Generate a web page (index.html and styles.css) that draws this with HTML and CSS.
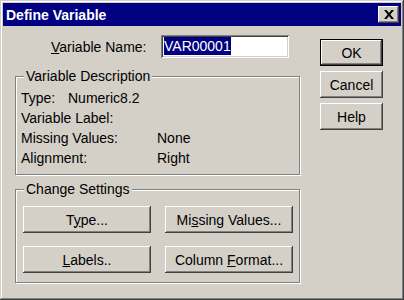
FILE: index.html
```html
<!DOCTYPE html>
<html lang="en">
<head>
    <meta charset="UTF-8">
    <title>Define Variable</title>
    <link rel="stylesheet" href="styles.css">
</head>
<body>
    <div class="window">
        <div class="titlebar">
            <span class="title">Define Variable</span>
            <div class="close-btn">
                <svg width="10" height="9" viewBox="0 0 10 9">
                    <path d="M0 0h2.6l2.4 2.9 2.4-2.9h2.6l-3.7 4.5 3.7 4.5h-2.6l-2.4-2.9-2.4 2.9h-2.6l3.7-4.5z" fill="#000"/>
                </svg>
            </div>
        </div>

        <div class="content">
            <div class="left">
                <div class="name-row">
                    <span class="name-label"><u>V</u>ariable Name:</span>
                    <div class="textbox"><span class="selected">VAR00001</span></div>
                </div>

                <div class="group group-desc">
                    <span class="legend">Variable Description</span>
                    <div class="desc-row"><span class="type-label">Type:</span><span>Numeric8.2</span></div>
                    <div class="desc-row"><span>Variable Label:</span></div>
                    <div class="desc-row"><span class="col-label">Missing Values:</span><span>None</span></div>
                    <div class="desc-row"><span class="col-label">Alignment:</span><span>Right</span></div>
                </div>

                <div class="group group-change">
                    <span class="legend">Change Settings</span>
                    <div class="btn-grid">
                        <div class="btn wide"><span>T<u>y</u>pe...</span></div>
                        <div class="btn wide"><span>Mi<u>s</u>sing Values...</span></div>
                        <div class="btn wide"><span><u>L</u>abels..</span></div>
                        <div class="btn wide"><span>Column <u>F</u>ormat...</span></div>
                    </div>
                </div>
            </div>

            <div class="right">
                <div class="btn side default">OK</div>
                <div class="btn side">Cancel</div>
                <div class="btn side">Help</div>
            </div>
        </div>
    </div>
</body>
</html>
```

FILE: styles.css
```css
body {
    margin: 0;
    font-family: "Liberation Sans", Arial, sans-serif;
    font-size: 14px;
    color: #000;
    background: #d4d0c8;
}
.window {
    width: 404px;
    height: 300px;
    box-sizing: border-box;
    background: #d4d0c8;
    padding: 3px;
    box-shadow: inset -1px -1px #404040, inset 1px 1px #d4d0c8, inset -2px -2px #808080, inset 2px 2px #fff;
}
.titlebar {
    height: 23px;
    background: #000080;
    display: flex;
    align-items: center;
    justify-content: space-between;
    padding: 0 2px 0 3px;
}
.title {
    color: #fff;
    font-weight: bold;
    font-size: 14px;
}
.close-btn {
    width: 21px;
    height: 17px;
    box-sizing: border-box;
    background: #d4d0c8;
    display: flex;
    align-items: center;
    justify-content: center;
    box-shadow: inset -1px -1px #404040, inset 1px 1px #fff, inset -2px -2px #808080;
}
.content {
    display: flex;
    padding-left: 12px;
}
.left {
    width: 285px;
}
.name-row {
    display: flex;
    align-items: center;
    margin-top: 9px;
    height: 23px;
}
.name-label {
    margin-left: 36px;
    width: 110px;
}
.textbox {
    width: 128px;
    height: 23px;
    box-sizing: border-box;
    background: #fff;
    padding: 2px 3px;
    box-shadow: inset 1px 1px #808080, inset -1px -1px #fff, inset 2px 2px #404040, inset -2px -2px #d4d0c8;
    line-height: 18px;
}
.selected {
    background: #000080;
    color: #fff;
    display: inline-block;
    height: 18px;
}
.group {
    border: 1px solid #808080;
    box-shadow: inset 1px 1px #fff, 1px 1px #fff;
    position: relative;
}
.legend {
    position: absolute;
    top: -9px;
    left: 8px;
    padding: 0 2px;
    background: #d4d0c8;
    line-height: 16px;
}
.group-desc {
    margin-top: 18px;
    height: 99px;
    padding: 11px 0 0 5px;
    box-sizing: border-box;
}
.desc-row {
    display: flex;
    height: 20px;
    line-height: 20px;
}
.type-label {
    width: 47px;
}
.col-label {
    width: 136px;
}
.group-change {
    margin-top: 14px;
    height: 94px;
    box-sizing: border-box;
    padding: 16px 0 0 7px;
}
.btn-grid {
    display: grid;
    grid-template-columns: 128px 128px;
    column-gap: 14px;
    row-gap: 13px;
}
.btn {
    height: 27px;
    box-sizing: border-box;
    display: flex;
    align-items: center;
    justify-content: center;
    background: #d4d0c8;
    box-shadow: inset -1px -1px #404040, inset 1px 1px #fff, inset -2px -2px #808080;
}
.right {
    margin-left: 20px;
    padding-top: 13px;
    display: flex;
    flex-direction: column;
    gap: 5px;
}
.side {
    width: 63px;
}
.default {
    border: 1px solid #000;
}
```
